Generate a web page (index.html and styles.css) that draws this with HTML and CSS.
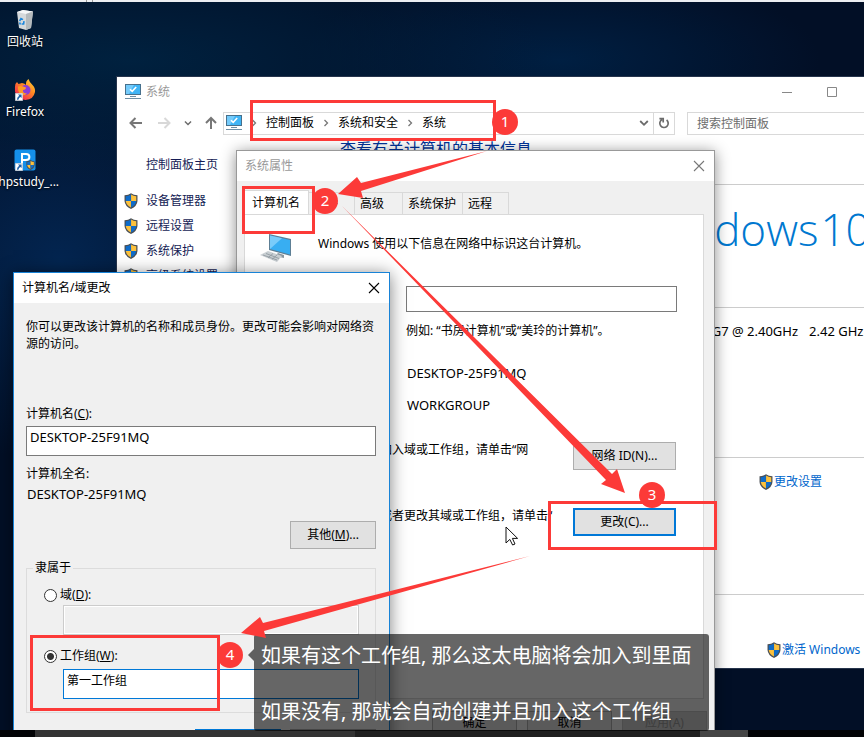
FILE: index.html
```html
<!DOCTYPE html>
<html lang="zh-CN">
<head>
<meta charset="utf-8">
<title>系统属性</title>
<link rel="stylesheet" href="styles.css">
</head>
<body>
<svg class="defs" width="0" height="0" aria-hidden="true">
  <defs>
    <symbol id="shield" viewBox="0 0 16 18">
      <path fill="#4a4f55" d="M8 0 Q11 2.2 15.4 2.4 V9 Q15 15 8 18 Q1 15 .6 9 V2.4 Q5 2.2 8 0Z"/>
      <path fill="#0f6cc9" d="M7.9 1.6 Q5.4 3.4 2 3.7 V9 H7.9Z"/>
      <path fill="#fcc13c" d="M8.1 1.6 Q10.6 3.4 14 3.7 V9 H8.1Z"/>
      <path fill="#fcc13c" d="M7.9 9 H2 Q2.6 13.8 7.9 16.4Z"/>
      <path fill="#0f6cc9" d="M8.1 9 H14 Q13.4 13.8 8.1 16.4Z"/>
    </symbol>
    <symbol id="monitor" viewBox="0 0 16 16">
      <rect x=".5" y=".5" width="15" height="10" fill="#3fb4f5" stroke="#47708c"/>
      <path fill="#74cbfb" d="M1 1H9L4 10H1Z"/>
      <path d="M5 5.2 7.2 7.4 11.2 3" fill="none" stroke="#fff" stroke-width="1.6"/>
      <path stroke="#6e8fa5" d="M5 12.5H11M0 14.5H16"/>
    </symbol>
    <symbol id="shortcut" viewBox="0 0 8 8">
      <path fill="#fff" stroke="#9aa4b0" stroke-width=".5" d="M.2.2H7.8V7.8H.2Z"/>
      <path fill="#1c5fa8" d="M3 1.4H6.6V5L5.4 3.9 Q3.7 4.6 3.4 6.8 H1.9 Q1.9 4 4.2 2.7Z"/>
    </symbol>
    <symbol id="crumb" viewBox="0 0 6 8"><path d="M1.5 1 4.5 4 1.5 7" fill="none" stroke="#777" stroke-width="1.3"/></symbol>
    <symbol id="down" viewBox="0 0 10 8"><path d="M1.2 2 5 5.8 8.8 2" fill="none" stroke="#6b6b6b" stroke-width="1.8"/></symbol>
    <symbol id="close" viewBox="0 0 12 12"><path d="M1 1 11 11M11 1 1 11" fill="none" stroke="currentColor" stroke-width="1.1"/></symbol>
  </defs>
</svg>

<main class="desktop">
  <div class="top-strip"></div>

  <nav class="shortcuts">
    <a class="shortcut" href="#bin">
      <svg width="20" height="22" viewBox="0 0 20 22">
        <path fill="#d5d9db" d="M2 3 8 1 18 2.5 16 19 11 21 4 19Z"/>
        <path fill="#f5f7f8" d="M2 3 8 1 18 2.5 11 5Z"/>
        <path fill="#b4babd" d="M11 5 18 2.5 16 19 11 21Z"/>
        <path d="M4.6 12 6 9.6 8 10.6M9 12.2 8.6 15H6.6M5.4 15.6 4.6 13.4" fill="none" stroke="#1b86dc" stroke-width="1.6"/>
      </svg>
      <span>回收站</span>
    </a>
    <a class="shortcut" href="#firefox">
      <svg width="22" height="22" viewBox="0 0 22 22">
        <defs><linearGradient id="fox" x1="1" y1="0" x2=".2" y2="1"><stop offset="0" stop-color="#ffe03a"/><stop offset=".45" stop-color="#ff8a22"/><stop offset="1" stop-color="#f0185a"/></linearGradient></defs>
        <path fill="url(#fox)" d="M1.4 5 3 3 4.5 5 8 4 Q11 4.5 12 6 Q11.5 2 14.5 0 Q15.5 3.5 18.5 6 Q21.5 9 21 13 Q19.5 20.6 11.5 21 Q2.5 20.6 1 12.5 Q.6 8 1.4 5Z"/>
        <circle cx="11.5" cy="11" r="5" fill="#8a3bd8"/>
        <path fill="#ff9a25" d="M4 7.5 Q7.5 6 12 8.5 Q12 10.5 9 11 Q8.6 14.5 13 14.5 Q10 17.5 6.5 15.5 Q3.5 12.5 4 7.5Z"/>
        <use href="#shortcut" x="1" y="14" width="8" height="8"/>
      </svg>
      <span>Firefox</span>
    </a>
    <a class="shortcut" href="#phpstudy">
      <svg width="22" height="22" viewBox="0 0 22 22">
        <rect x=".5" y=".5" width="21" height="21" rx="2" fill="#1590ea"/>
        <path d="M8 15V5H12Q15.4 5 15.4 8T12 11H8" fill="none" stroke="#fff" stroke-width="2"/>
        <use href="#shield" x="12" y="11" width="9" height="10"/>
        <use href="#shortcut" x="1" y="14" width="8" height="8"/>
      </svg>
      <span>phpstudy_...</span>
    </a>
  </nav>

  <section class="window system">
    <header class="titlebar">
      <svg width="16" height="16"><use href="#monitor"/></svg>
      <h1 class="title">系统</h1>
      <div class="controls">
        <button aria-label="最小化"><svg width="10" height="10"><path stroke="#888" d="M0 5.5H10"/></svg></button>
        <button aria-label="最大化"><svg width="10" height="10"><path fill="none" stroke="#888" d="M.5.5H9.5V9.5H.5Z"/></svg></button>
      </div>
    </header>
    <div class="navbar">
      <div class="history">
        <button aria-label="后退"><svg width="16" height="12"><path d="M14 6H3M7.5 1 2.5 6 7.5 11" fill="none" stroke="#777" stroke-width="2"/></svg></button>
        <button aria-label="前进"><svg width="16" height="12"><path d="M2 6H13M8.5 1 13.5 6 8.5 11" fill="none" stroke="#d8d8d8" stroke-width="2"/></svg></button>
        <button aria-label="最近"><svg width="8" height="8"><use href="#down"/></svg></button>
        <button aria-label="向上"><svg width="14" height="14"><path d="M7 13V2M2 7 7 2 12 7" fill="none" stroke="#777" stroke-width="2"/></svg></button>
      </div>
      <div class="address">
        <svg width="16" height="16"><use href="#monitor"/></svg>
        <svg width="6" height="8"><use href="#crumb"/></svg>
        <a href="#cp">控制面板</a>
        <svg width="6" height="8"><use href="#crumb"/></svg>
        <a href="#sec">系统和安全</a>
        <svg width="6" height="8"><use href="#crumb"/></svg>
        <a href="#sys">系统</a>
        <button class="history-drop" aria-label="展开"><svg width="10" height="8"><use href="#down"/></svg></button>
        <button class="refresh" aria-label="刷新"><svg width="12" height="12"><path d="M8.6 3A4.2 4.2 0 1 1 4 2.6M1.4 1.6H5.2V5.4" fill="none" stroke="#6b6b6b" stroke-width="1.7"/></svg></button>
      </div>
      <input class="search" type="text" aria-label="搜索控制面板" placeholder="搜索控制面板">
    </div>
    <div class="system-body">
      <aside class="sidebar">
        <a class="home" href="#home">控制面板主页</a>
        <a href="#dev"><svg width="14" height="16"><use href="#shield"/></svg>设备管理器</a>
        <a href="#remote"><svg width="14" height="16"><use href="#shield"/></svg>远程设置</a>
        <a href="#protect"><svg width="14" height="16"><use href="#shield"/></svg>系统保护</a>
        <a href="#adv"><svg width="14" height="16"><use href="#shield"/></svg>高级系统设置</a>
      </aside>
      <div class="details">
        <h2>查看有关计算机的基本信息</h2>
        <div class="brand"><span>Windows</span><span>10</span></div>
        <div class="spec"><span>i5-1135G7 @ 2.40GHz</span><span>2.42 GHz</span></div>
        <div class="change"><a href="#change"><svg width="14" height="16"><use href="#shield"/></svg>更改设置</a></div>
        <div class="activate"><a href="#activate"><svg width="14" height="16"><use href="#shield"/></svg>激活 Windows</a></div>
      </div>
    </div>
  </section>

  <section class="window properties">
    <header class="titlebar">
      <h2 class="title">系统属性</h2>
      <button class="close" aria-label="关闭"><svg width="12" height="12"><use href="#close"/></svg></button>
    </header>
    <div class="tabs">
      <button class="tab current">计算机名</button>
      <button class="tab">硬件</button>
      <button class="tab advanced">高级</button>
      <button class="tab wide">系统保护</button>
      <button class="tab">远程</button>
    </div>
    <div class="panel">
      <div class="intro">
        <svg width="32" height="30" viewBox="0 0 32 30">
          <path fill="#5d7f95" d="M9 0 31 5V22L9 16Z"/>
          <path fill="#38aef2" d="M10 1.4 30 6V20.4L10 15Z"/>
          <path fill="#79ccfa" d="M10 1.4 22 4.2 10 15Z"/>
          <path fill="#8b979f" d="M18 19 24 21V24L15 22Z"/>
          <path fill="#c9cfd3" d="M0 21 8 17 22 22 17 28Z"/>
          <path d="M3 21 17 26M6 19.5 19 24.5M8 23.8 13 19.5M12 25.4 17 21" stroke="#8d979e" fill="none" stroke-width=".8"/>
        </svg>
        <p>Windows 使用以下信息在网络中标识这台计算机。</p>
      </div>
      <div class="fields">
        <input type="text" aria-label="计算机描述">
        <p class="example">例如: “书房计算机”或“美玲的计算机”。</p>
        <p class="name">DESKTOP-25F91MQ</p>
        <p class="group">WORKGROUP</p>
      </div>
      <div class="action">
        <p>若要使用向导将计算机加入域或工作组，请单击“网</p>
        <button class="push">网络 ID(N)...</button>
      </div>
      <div class="action">
        <p>要重命名这台计算机，或者更改其域或工作组，请单击“</p>
        <button class="push default">更改(C)...</button>
      </div>
    </div>
    <footer class="buttons">
      <button class="push">确定</button>
      <button class="push">取消</button>
      <button class="push" disabled>应用(A)</button>
    </footer>
  </section>

  <section class="window rename">
    <header class="titlebar">
      <h2 class="title">计算机名/域更改</h2>
      <button class="close" aria-label="关闭"><svg width="12" height="12"><use href="#close"/></svg></button>
    </header>
    <form class="rename-body">
      <p class="lead">你可以更改该计算机的名称和成员身份。更改可能会影响对网络资源的访问。</p>
      <label for="pc">计算机名(<u>C</u>):</label>
      <input id="pc" type="text" value="DESKTOP-25F91MQ">
      <p class="full-label">计算机全名:</p>
      <p class="full-name">DESKTOP-25F91MQ</p>
      <button class="push more" type="button">其他(<u>M</u>)...</button>
      <fieldset>
        <legend>隶属于</legend>
        <label class="choice"><input type="radio" name="member"><span>域(<u>D</u>):</span></label>
        <input type="text" aria-label="域" disabled>
        <label class="choice"><input type="radio" name="member" checked><span>工作组(<u>W</u>):</span></label>
        <input class="focus" type="text" aria-label="工作组" value="第一工作组">
      </fieldset>
      <div class="buttons">
        <button class="push default" type="button" aria-label="确定"></button>
        <button class="push" type="button" aria-label="取消"></button>
      </div>
    </form>
  </section>

  <svg class="cursor" width="14" height="20" viewBox="0 0 14 20"><path fill="#fff" stroke="#111" d="M1 1V17L4.8 13.4 7.6 19 10 18 7.4 12.4H12.6Z"/></svg>

  <footer class="taskbar"></footer>

  <aside class="tooltip">
    <p>如果有这个工作组, 那么这太电脑将会加入到里面</p>
    <p>如果没有, 那就会自动创建并且加入这个工作组</p>
  </aside>

  <svg class="arrows" width="864" height="737" viewBox="0 0 864 737" fill="#fc3a38">
    <path d="M487 151 361 183 357 177 338 194 363 198 361 191Z"/>
    <path d="M342 206 612 474 617 469 625 493 601 484 606 480Z"/>
    <path d="M530 556 263 623 260 617 241 633 266 638 264 631Z"/>
  </svg>
  <div class="frame frame-1"></div>
  <div class="frame frame-2"></div>
  <div class="frame frame-3"></div>
  <div class="frame frame-4"></div>
  <span class="step step-1">1</span>
  <span class="step step-2">2</span>
  <span class="step step-3">3</span>
  <span class="step step-4">4</span>
</main>
</body>
</html>
```
FILE: styles.css
```css
* { box-sizing: border-box; }

body {
  margin: 0;
  font: 12px/16px "Noto Sans", "Noto Sans CJK SC", sans-serif;
  color: #000;
}

h1, h2, p { margin: 0; font-weight: 400; }
a { color: inherit; text-decoration: none; }
svg { display: block; flex: none; }
button, input { font: inherit; color: inherit; }
button { padding: 0; border: 0; background: none; }
.defs { position: absolute; }

.desktop {
  position: relative;
  height: 100vh;
  overflow: hidden;
  background:
    radial-gradient(ellipse 420px 120px at 130px 60px, #00213f, transparent),
    radial-gradient(ellipse 240px 200px at 60px 260px, #032550, transparent),
    radial-gradient(ellipse 260px 90px at 560px 60px, #001f42, transparent),
    #020f26;
}

.top-strip {
  height: 2px;
  background: linear-gradient(90deg, #eceef2 86px, #999 86px 87px, #eceef2 87px 92px, #999 92px 93px, #eceef2 93px);
}

/* Desktop shortcuts */
.shortcuts {
  display: flex;
  flex-direction: column;
  gap: 29px;
  width: 50px;
  padding-top: 7px;
}
.shortcut {
  display: flex;
  flex-direction: column;
  align-items: center;
  gap: 3px;
  color: #fff;
  white-space: nowrap;
  text-shadow: 0 1px 2px #000;
}
.shortcut svg { height: 22px; }

/* Windows */
.window {
  position: absolute;
  display: flex;
  flex-direction: column;
  background: #f0f0f0;
  white-space: nowrap;
}
.titlebar {
  display: flex;
  align-items: center;
  height: 30px;
  flex: none;
  padding: 0 9px 0 8px;
  background: #fff;
}
.title { font-size: 12px; color: #999; }
.titlebar .close { margin-left: auto; color: #777; }

.push {
  height: 28px;
  border: 1px solid #adadad;
  background: #e1e1e1;
}
.push.default { border: 2px solid #0078d7; }
.push:disabled { color: #999; background: #ccc; border-color: #bfbfbf; }

input[type="text"] {
  display: block;
  border: 1px solid #7a7a7a;
  border-radius: 0;
  background: #fff;
  outline: 0;
}

/* System window */
.system {
  left: 116px;
  top: 76px;
  right: -56px;
  height: 593px;
  border: 1px solid #26344c;
  background: #fff;
}
.system .titlebar { gap: 5px; padding-right: 72px; }
.controls { display: flex; gap: 35px; margin-left: auto; padding-right: 10px; }

.navbar {
  display: flex;
  align-items: center;
  gap: 12px;
  height: 32px;
  padding-left: 11px;
}
.history { display: flex; align-items: center; gap: 12px; margin-right: -7px; }
.address {
  display: flex;
  align-items: center;
  gap: 9px;
  width: 452px;
  height: 23px;
  padding-left: 2px;
  border: 1px solid #d9d9d9;
}
.history-drop { margin-left: auto; }
.refresh {
  display: flex;
  align-items: center;
  justify-content: center;
  width: 21px;
  height: 21px;
  border-left: 1px solid #d9d9d9;
  margin-left: -5px;
}
.navbar .search {
  flex: 1;
  height: 23px;
  padding: 0 9px;
  border-color: #d9d9d9;
}
.search::placeholder { color: #6d6d6d; }

.system-body { display: flex; flex: 1; }
.sidebar {
  display: flex;
  flex-direction: column;
  width: 223px;
  padding: 18px 0 0 7px;
  color: #151c55;
}
.sidebar a { display: flex; align-items: center; gap: 8px; height: 25px; }
.sidebar .home { height: 16px; margin-bottom: 15px; padding-left: 22px; }

.details { flex: 1; display: flex; flex-direction: column; }
.details h2 { height: 45px; font-size: 16px; line-height: 20px; color: #003399; }
.details > div { border-top: 1px solid #ccc; }
.brand {
  display: flex;
  gap: 2px;
  height: 123px;
  padding: 9px 0 0 299px;
  font: 300 44px/70px "Open Sans", "Noto Sans", sans-serif;
  color: #0078d0;
}
.spec { display: flex; gap: 11px; height: 150px; padding: 15px 0 0 327px; font-size: 13px; }
.change { height: 137px; padding: 16px 0 0 419px; color: #0066cc; }
.activate { padding: 47px 0 0 427px; color: #0066cc; }
.details a { display: flex; align-items: center; gap: 1px; }

/* System properties dialog */
.properties {
  left: 236px;
  top: 150px;
  width: 479px;
  height: 600px;
  border: 1px solid #999;
  box-shadow: 0 2px 14px rgba(0, 0, 0, .45);
}
.tabs { display: flex; align-items: flex-end; height: 33px; padding-left: 7px; flex: none; }
.tab {
  width: 47px;
  height: 22px;
  margin-right: -1px;
  padding-left: 5px;
  border: 1px solid #d9d9d9;
  border-bottom: 0;
  text-align: left;
}
.tab.advanced { width: 49px; }
.tab.wide { width: 61px; }
.tab.current { width: 65px; height: 24px; padding-left: 7px; background: #fff; }
.panel {
  height: 485px;
  flex: none;
  margin: 0 10px 0 7px;
  padding: 19px 27px 0 15px;
  border: 1px solid #d9d9d9;
  background: #fff;
}
.intro { display: flex; gap: 26px; height: 52px; }
.intro p { padding-top: 2px; }
.fields { padding-left: 146px; }
.fields input { width: 271px; height: 26px; }
.example { padding-top: 11px; }
.name { padding-top: 26px; }
.group { padding-top: 16px; }
.group, .name { margin-left: 1px; font-size: 13px; }
.action { display: flex; justify-content: space-between; height: 66px; }
.fields + .action { margin-top: 29px; }
.action .push { width: 103px; }
.properties > .buttons { display: flex; gap: 10px; justify-content: flex-end; padding: 12px 7px; }
.properties > .buttons .push { width: 85px; height: 24px; }

/* Rename dialog */
.rename {
  left: 13px;
  top: 272px;
  width: 377px;
  height: 500px;
  border: 1px solid #1883d7;
  box-shadow: 0 2px 16px rgba(0, 0, 0, .5);
}
.rename .title, .rename .close { color: #000; }
.rename-body { display: flex; flex-direction: column; padding: 15px 13px 0 12px; }
.lead { height: 88px; line-height: 17px; white-space: normal; }
.rename-body > input { height: 30px; margin-top: 4px; padding: 0 3px 8px; font-size: 13px; }
.full-label { padding-top: 10px; }
.full-name { padding-top: 4px; margin-left: 1px; font-size: 13px; }
.more { align-self: flex-end; width: 86px; margin-top: 19px; }
fieldset {
  height: 153px;
  min-width: 0;
  margin: 11px 0 0;
  padding: 10px 16px 0 17px;
  border: 1px solid #dcdcdc;
}
legend { padding: 0 2px; margin-left: -11px; }
.choice { display: flex; align-items: center; gap: 3px; height: 18px; }
.choice input {
  appearance: none;
  width: 13px;
  height: 13px;
  margin: 0;
  border: 1px solid #333;
  border-radius: 50%;
  background: #fff;
}
.choice input:checked { background: radial-gradient(circle, #333 3px, #fff 4px); }
fieldset input[type="text"] {
  width: calc(100% - 19px);
  height: 30px;
  margin: 1px 0 12px 19px;
  padding: 0 3px 8px;
}
fieldset input[type="text"]:disabled { border-color: #ccc; background: #f0f0f0; box-shadow: inset 0 0 0 1px #fff; }
fieldset input[type="text"].focus { border-color: #0078d7; margin-top: 4px; }
.rename .buttons { display: flex; justify-content: flex-end; gap: 9px; margin-top: 16px; }
.rename .buttons .push { width: 86px; }

.cursor { position: absolute; left: 505px; top: 526px; }

.taskbar {
  position: absolute;
  inset: auto 0 0;
  height: 7px;
  background: linear-gradient(90deg, #020305 35px, #333 35px 355px, #202020 355px 700px, #454545 700px 748px, #020305 748px);
}

/* Annotations */
.tooltip {
  position: absolute;
  left: 254px;
  top: 634px;
  display: flex;
  flex-direction: column;
  gap: 28px;
  width: 455px;
  height: 97px;
  padding: 8px 7px;
  border-radius: 3px;
  background: rgba(0, 0, 0, .6);
  color: #fff;
  font-size: 20px;
  line-height: 28px;
  white-space: nowrap;
}
.tooltip::before {
  content: "";
  position: absolute;
  left: -6px;
  top: 15px;
  border: solid transparent;
  border-width: 6px 6px 6px 0;
  border-right-color: rgba(0, 0, 0, .6);
}
.arrows { position: absolute; left: 0; top: 0; pointer-events: none; }
.frame { position: absolute; border: 3px solid #fc3a38; pointer-events: none; }
.frame-1 { left: 250px; top: 100px; width: 246px; height: 41px; }
.frame-2 { left: 242px; top: 186px; width: 73px; height: 48px; }
.frame-3 { left: 548px; top: 501px; width: 169px; height: 49px; }
.frame-4 { left: 30px; top: 635px; width: 190px; height: 76px; }
.step {
  position: absolute;
  width: 26px;
  height: 26px;
  border-radius: 50%;
  background: #fc3a38;
  color: #fff;
  font-size: 15px;
  line-height: 25px;
  text-align: center;
}
.step-1 { left: 492px; top: 109px; }
.step-2 { left: 312px; top: 188px; }
.step-3 { left: 639px; top: 482px; }
.step-4 { left: 217px; top: 642px; }
```
